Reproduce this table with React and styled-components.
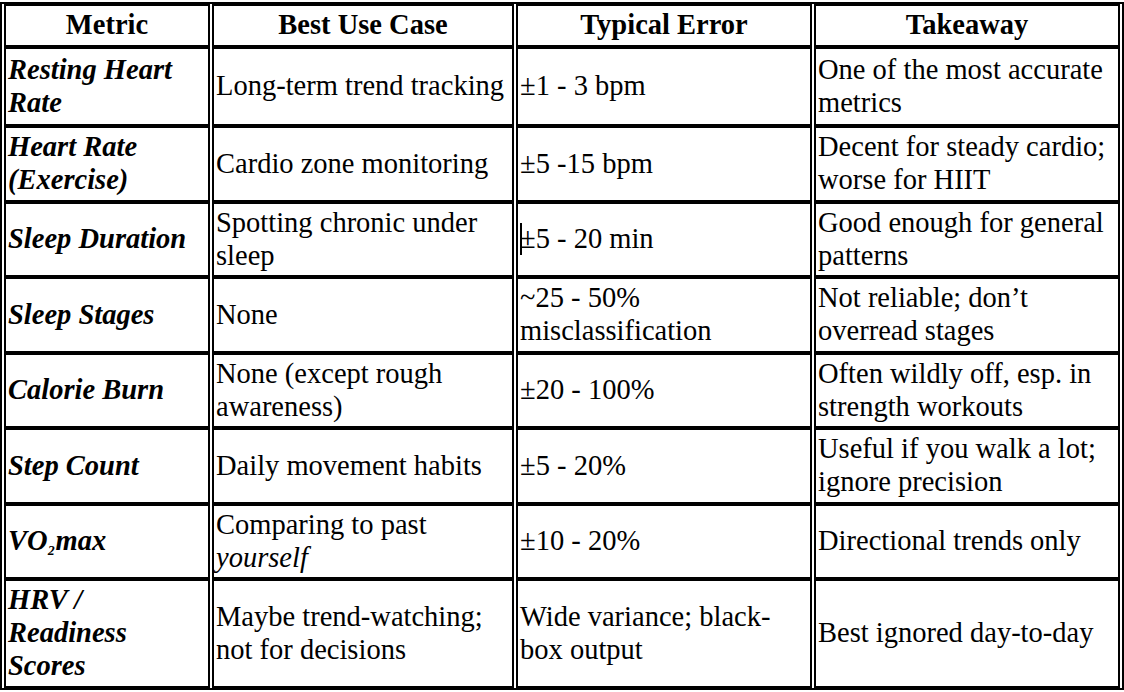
import { createGlobalStyle, styled } from "styled-components";

const GlobalStyle = createGlobalStyle`
  * { box-sizing: border-box; }
  body {
    margin: 0;
    background: #fff;
    font-family: "Liberation Serif", "Times New Roman", serif;
    color: #000;
  }
`;

const columns = [
  { label: "Metric", width: 206 },
  { label: "Best Use Case", width: 302 },
  { label: "Typical Error", width: 296 },
  { label: "Takeaway", width: 306 },
];

const rows = [
  ["Resting Heart Rate", "Long-term trend tracking", "±1 - 3 bpm", "One of the most accurate metrics"],
  ["Heart Rate (Exercise)", "Cardio zone monitoring", "±5 -15 bpm", "Decent for steady cardio; worse for HIIT"],
  ["Sleep Duration", "Spotting chronic under sleep", "caret", "Good enough for general patterns"],
  ["Sleep Stages", "None", "~25 - 50% misclassification", "Not reliable; don’t overread stages"],
  ["Calorie Burn", "None (except rough awareness)", "±20 - 100%", "Often wildly off, esp. in strength workouts"],
  ["Step Count", "Daily movement habits", "±5 - 20%", "Useful if you walk a lot; ignore precision"],
  ["vo2", "yourself", "±10 - 20%", "Directional trends only"],
  ["HRV / Readiness Scores", "Maybe trend-watching; not for decisions", "Wide variance; black-box output", "Best ignored day-to-day"],
];

export default function App() {
  const renderCell = (text) => {
    if (text === "caret") {
      return (<><Caret />±5 - 20 min</>);
    }
    if (text === "yourself") {
      return (<>Comparing to past <em>yourself</em></>);
    }
    if (text === "vo2") {
      return (<>VO<Sub>₂</Sub>max</>);
    }
    return text;
  };

  return (
    <>
      <GlobalStyle />
      <Table>
        <thead>
          <tr>
            {columns.map((c) => (
              <Th key={c.label} $width={c.width}>{c.label}</Th>
            ))}
          </tr>
        </thead>
        <tbody>
          {rows.map((r, i) => (
            <tr key={`row_${i}`}>
              <MetricCell $tall={i === 0}>{renderCell(r[0])}</MetricCell>
              <Td>{renderCell(r[1])}</Td>
              <Td>{renderCell(r[2])}</Td>
              <Td>{r[3]}</Td>
            </tr>
          ))}
        </tbody>
      </Table>
    </>
  );
}

const Table = styled.table`
  width: 1124px;
  margin-top: 2px;
  table-layout: fixed;
  border-collapse: separate;
  border-spacing: 2px 0;
  border: 2px solid #000;
  font-family: "Liberation Serif", "Times New Roman", serif;
  font-size: 28.5px;
  line-height: 1.15;
  color: #000;
`;

const Th = styled.th`
  width: ${(p) => p.$width}px;
  border: 2px solid #000;
  padding: 3px 2px;
  font-weight: bold;
  text-align: center;
`;

const Td = styled.td`
  border: 2px solid #000;
  padding: 3px 2px;
  vertical-align: middle;
  em {
    font-style: italic;
  }
`;

const MetricCell = styled(Td)`
  font-weight: bold;
  font-style: italic;
  padding: ${(p) => (p.$tall ? "5px 2px" : "3px 2px")};
`;

const Sub = styled.span`
  font-size: 0.8em;
`;

const Caret = styled.span`
  display: inline-block;
  width: 2px;
  height: 32px;
  background: #000;
  vertical-align: -7px;
  margin-right: -2px;
`;
